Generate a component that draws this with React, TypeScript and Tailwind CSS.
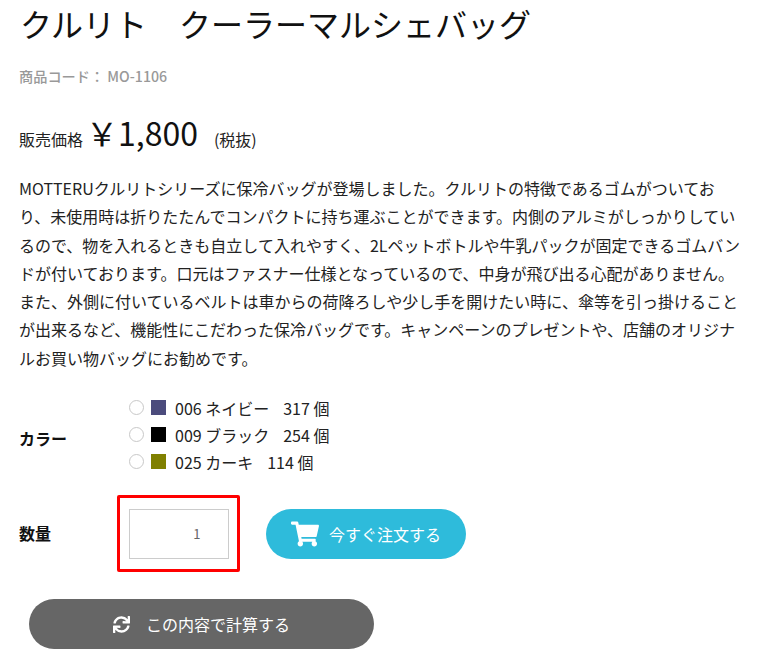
import { FaShoppingCart, FaSync } from 'react-icons/fa';

const colors = [
	{ swatch: 'bg-[#4b4b7c]', label: '006 ネイビー', stock: '317 個' },
	{ swatch: 'bg-black', label: '009 ブラック', stock: '254 個' },
	{ swatch: 'bg-[#808000]', label: '025 カーキ', stock: '114 個' },
];

const App = () => {
	return (
		<div className="w-[766px] h-[663px] overflow-hidden bg-white text-[#222] font-['Noto_Sans_CJK_JP','Noto_Sans',sans-serif]">
			<div className="pl-[19px] pr-[22px]">
				{/* Title */}
				<h1 className="ml-px text-[32px] leading-[46px] font-normal text-[#111]">クルリト　クーラーマルシェバッグ</h1>

				{/* Code */}
				<p className="mt-5 text-[14.2px] leading-5 font-medium text-[#999]">商品コード： MO-1106</p>

				{/* Price */}
				<div className="mt-[22px] flex items-baseline h-[48px]">
					<span className="text-base">販売価格</span>
					<span className="ml-[3px] text-[32px] leading-[48px] text-[#111]">￥1,800</span>
					<span className="ml-4 text-base">(税抜)</span>
				</div>

				{/* Description */}
				<p className="mt-[18px] text-base leading-[28.3px] text-[#222]">
					MOTTERUクルリトシリーズに保冷バッグが登場しました。クルリトの特徴であるゴムがついており、未使用時は折りたたんでコンパクトに持ち運ぶことができます。内側のアルミがしっかりしているので、物を入れるときも自立して入れやすく、2Lペットボトルや牛乳パックが固定できるゴムバンドが付いております。口元はファスナー仕様となっているので、中身が飛び出る心配がありません。また、外側に付いているベルトは車からの荷降ろしや少し手を開けたい時に、傘等を引っ掛けることが出来るなど、機能性にこだわった保冷バッグです。キャンペーンのプレゼントや、店舗のオリジナルお買い物バッグにお勧めです。
				</p>

				{/* Color */}
				<div className="mt-[22px] flex items-center">
					<div className="w-[110px] mt-[6px] text-base font-bold text-[#111]">カラー</div>
					<div className="flex flex-col">
						{colors.map(color => (
							<label key={color.label} className="flex items-center h-[27px] text-base text-[#222]">
								<span className="w-[15px] h-[15px] rounded-full border border-[#c8c8c8] bg-white" />
								<span className={`ml-[7px] w-[15px] h-[15px] ${color.swatch}`} />
								<span className="ml-[9px]">{color.label}</span>
								<span className="ml-[14px]">{color.stock}</span>
							</label>
						))}
					</div>
				</div>

				{/* Quantity */}
				<div className="mt-[20px] flex items-center">
					<div className="w-[98px] -mt-[2px] text-base font-bold text-[#111]">数量</div>
					<div className="w-[123px] h-[77px] border-[3px] border-[#f00] rounded-[2px] flex items-center justify-center">
						<input
							readOnly
							value="1"
							className="w-[100px] h-[50px] border border-[#ccc] text-right pr-[27px] text-[13px] text-[#666] outline-none"
						/>
					</div>
					<button className="ml-[26px] w-[200px] h-[50px] rounded-[25px] bg-[#2ebbdb] text-white text-base flex items-center justify-center gap-[10px]">
						<FaShoppingCart size={28} />
						<span>今すぐ注文する</span>
					</button>
				</div>

				{/* Recalculate */}
				<button className="mt-[27px] ml-[10px] w-[345px] h-[50px] rounded-[25px] bg-[#666] text-white text-base flex items-center justify-center gap-[16px]">
					<FaSync size={17} />
					<span>この内容で計算する</span>
				</button>
			</div>
		</div>
	);
};

export default App;
